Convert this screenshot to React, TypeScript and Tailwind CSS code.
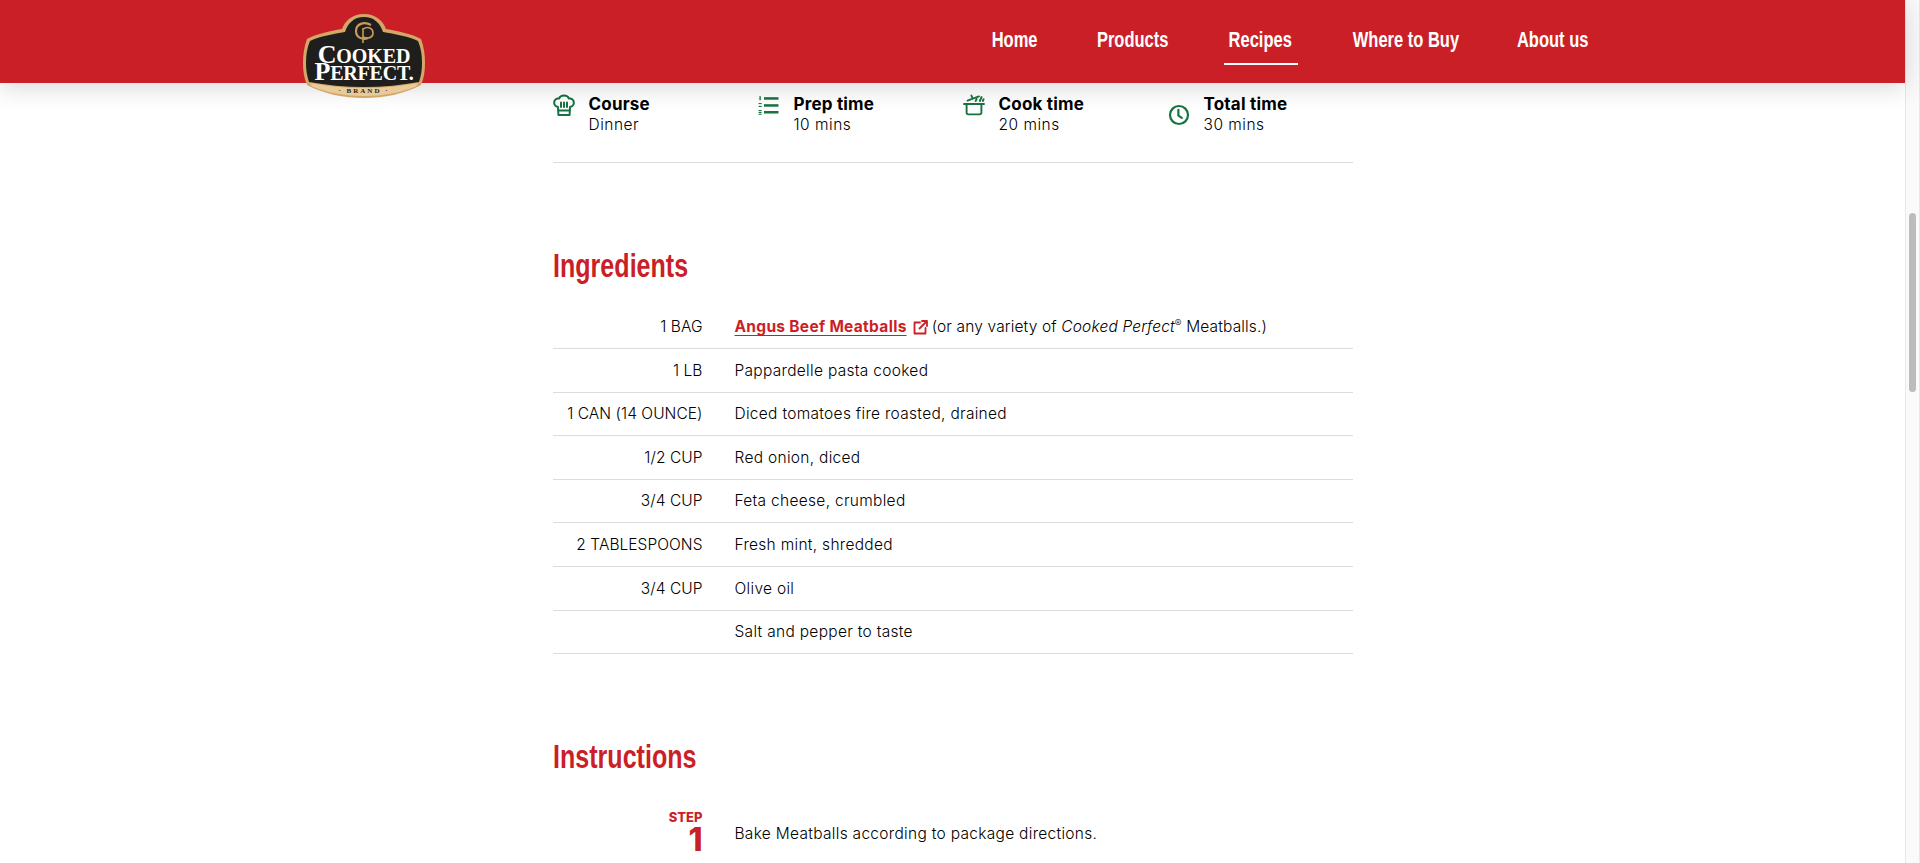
const navLinks = [
  { label: "Home", width: "w-[56px]" },
  { label: "Products", width: "w-[82px]" },
  { label: "Recipes", width: "w-[74px]", active: true },
  { label: "Where to Buy", width: "w-[117px]" },
  { label: "About us", width: "w-[79px]" },
];

const meta = [
  { label: "Course", value: "Dinner", icon: <ChefIcon />, iconClass: "" },
  { label: "Prep time", value: "10 mins", icon: <ListIcon />, iconClass: "" },
  { label: "Cook time", value: "20 mins", icon: <PotIcon />, iconClass: "" },
  { label: "Total time", value: "30 mins", icon: <ClockIcon />, iconClass: "mt-[10px]" },
];

const ingredients = [
  { qty: "1 LB", name: "Pappardelle pasta cooked" },
  { qty: "1 CAN (14 OUNCE)", name: "Diced tomatoes fire roasted, drained" },
  { qty: "1/2 CUP", name: "Red onion, diced" },
  { qty: "3/4 CUP", name: "Feta cheese, crumbled" },
  { qty: "2 TABLESPOONS", name: "Fresh mint, shredded" },
  { qty: "3/4 CUP", name: "Olive oil" },
  { qty: "", name: "Salt and pepper to taste" },
];

function ChefIcon() {
  return (
    <svg width="22" height="22" viewBox="0 0 22 22" fill="none" stroke="#17733f" strokeWidth="2" strokeLinejoin="round" strokeLinecap="round">
      <path d="M5 13C2.4 12.4 1 10.6 1.2 8.2 1.4 5.6 3.6 4 6 4.6 6.8 2.6 8.6 1.6 11 1.6s4.2 1 5 3c2.4-.6 4.6 1 4.8 3.6.2 2.4-1.2 4.2-3.8 4.8l-.4 8H5.4z" />
      <path d="M5.4 16.4h11.2M8 8.5v4.5M11 8.5v4.5M14 8.5v4.5" />
    </svg>
  );
}

function ListIcon() {
  return (
    <svg width="21" height="19" viewBox="0 0 21 19" fill="#17733f">
      <rect x="6" y="1.2" width="14.5" height="2.5" />
      <rect x="6" y="8.2" width="14.5" height="2.5" />
      <rect x="6" y="15" width="14.5" height="2.5" />
      <rect x="1.4" y="0.2" width="1.4" height="4" />
      <rect x="0.6" y="7" width="3" height="1.1" />
      <rect x="0.6" y="9.9" width="3" height="1.1" />
      <rect x="0.6" y="14" width="3" height="1.1" />
      <rect x="0.6" y="15.9" width="3" height="1.1" />
      <rect x="0.6" y="17.7" width="3" height="1.1" />
    </svg>
  );
}

function PotIcon() {
  return (
    <svg width="22" height="22" viewBox="0 0 22 22" fill="none" stroke="#17733f" strokeWidth="1.9" strokeLinecap="round" strokeLinejoin="round">
      <path d="M3.6 10v8.6c0 1 .8 1.8 1.8 1.8h11.2c1 0 1.8-.8 1.8-1.8V10z" />
      <path d="M1 10h20M4.5 6.6l11.5-4.2M9.2 3.4 8.4 1.6M18.6 3l-1.8 4M20.6 5.2l-.8 1.8M13.6 5.2l-1 1.8" />
    </svg>
  );
}

function ClockIcon() {
  return (
    <svg width="22" height="22" viewBox="0 0 22 22" fill="none" stroke="#17733f" strokeWidth="2.2" strokeLinecap="round" strokeLinejoin="round">
      <circle cx="11" cy="11" r="9" />
      <path d="M10.4 5.8v5.8l3.4 2.2" />
    </svg>
  );
}

function Logo() {
  return (
    <div className="absolute left-[302px] top-[13px] h-[86px] w-[124px] [font-family:'Liberation_Serif',serif]">
      <svg className="absolute inset-0" width="124" height="86" viewBox="0 0 124 86">
        <path
          d="M62 1C50 1 43 8 40 16C28 18 14 21 5 26C2 34 1 42 1 50C1 58 2 65 5 72C22 81 42 85 62 85S102 81 119 72C122 65 123 58 123 50C123 42 122 34 119 26C110 21 96 18 84 16C81 8 74 1 62 1Z"
          fill="#d3a768"
        />
        <path
          d="M62 4C52 4 46 10 43 19C32 21 18 23 8 28C5 35 4 42 4 50C4 57 5 63 7 69C24 72 43 74 62 74S100 72 117 69C119 63 120 57 120 50C120 42 119 35 116 28C106 23 92 21 81 19C78 10 72 4 62 4Z"
          fill="#1e1e1c"
        />
        <path d="M8 70C24 73 43 75 62 75S100 73 116 70C115 72 114 73 113 74C97 80 80 83 62 83S27 80 11 74C10 73 9 72 8 70Z" fill="#e9cb9a" />
        <path d="M69 12C62 8 54 11 54 18S61 27 66 25" fill="none" stroke="#c99a5b" strokeWidth="2.2" />
        <path d="M61 15V30M61 16C66 13 71 15 71 20S66 26 61 24" fill="none" stroke="#c99a5b" strokeWidth="1.6" />
      </svg>
      <div className="absolute inset-x-0 top-[33px] flex flex-col items-center font-bold leading-none text-white">
        <span className="h-[17px] text-[26px] leading-[17px] tracking-[-0.1px]">
          C<span className="text-[20px]">OOKED</span>
        </span>
        <span className="h-[17px] text-[26px] leading-[17px] tracking-[-0.2px]">
          P<span className="text-[20px]">ERFECT.</span>
        </span>
      </div>
      <div className="absolute inset-x-0 top-[74px] text-center text-[7px] font-bold leading-[8px] tracking-[2px] text-[#2a2118]">
        · BRAND ·
      </div>
    </div>
  );
}

export default function App() {
  return (
    <div className="flex h-[863px] overflow-hidden bg-white [font-family:Inter,sans-serif] text-black">
      <div className="relative min-w-0 flex-1">
        {/* Header */}
        <header className="absolute inset-x-0 top-0 z-10 h-[83px] bg-[#cb1f28] shadow-[0_4px_24px_rgba(0,0,0,0.16)]">
          <Logo />
          <nav className="absolute left-[986.5px] top-[17px] flex items-start gap-[49.5px] [font-family:'Liberation_Sans',sans-serif] text-[22px] font-bold text-white">
            {navLinks.map((l) => (
              <a
                key={l.label}
                className={`flex h-[48px] justify-center border-b-2 leading-[46px] ${l.width} ${l.active ? "border-white" : "border-transparent"}`}
              >
                <span className="shrink-0 scale-x-[0.75] whitespace-nowrap">{l.label}</span>
              </a>
            ))}
          </nav>
        </header>

        <main className="mx-auto w-[800px] pt-[94px]">
          {/* Recipe meta */}
          <div className="grid h-[69px] grid-cols-[repeat(4,205px)] border-b border-[#dcdcdc]">
            {meta.map((m) => (
              <div key={m.label} className="flex gap-[14px]">
                <div className={`flex h-[22px] w-[22px] items-center justify-center ${m.iconClass}`}>{m.icon}</div>
                <div>
                  <div className="text-[17px] font-bold leading-[20px] tracking-[0.2px]">{m.label}</div>
                  <div className="text-[15.5px] font-light leading-[21px] tracking-[0.5px]">{m.value}</div>
                </div>
              </div>
            ))}
          </div>

          <h2 className="mt-[80px] h-[46px] origin-left scale-x-[0.76] whitespace-nowrap [font-family:'Liberation_Sans',sans-serif] text-[33px] font-bold leading-[46px] text-[#cb1f28]">
            Ingredients
          </h2>

          {/* Ingredients */}
          <div className="mt-[17px] text-[15.5px] font-light tracking-[0.3px]">
            <div className="flex h-[43px] items-center border-b border-[#dcdcdc]">
              <div className="w-[150px] text-right tracking-[0.05px]">1 BAG</div>
              <div className="ml-[32px] flex items-center">
                <a className="font-bold text-[#cb1f28] underline underline-offset-[3px]">Angus Beef Meatballs</a>
                <svg className="ml-[6px] mr-[4px]" width="15" height="15" viewBox="0 0 15 15" fill="none" stroke="#cb1f28" strokeWidth="1.8" strokeLinecap="round" strokeLinejoin="round">
                  <path d="M7 2.5H1.5v11h11V8M6.5 8.5 13.5 1.5M9 1h5v5" />
                </svg>
                <span className="tracking-[0.15px]">
                  (or any variety of <em>Cooked Perfect</em>
                  <sup className="text-[10px]">®</sup> Meatballs.)
                </span>
              </div>
            </div>
            {ingredients.map((row) => (
              <div key={row.name} className="flex h-[43.6px] items-center border-b border-[#dcdcdc]">
                <div className="w-[150px] text-right tracking-[0.05px]">{row.qty}</div>
                <div className="ml-[32px]">{row.name}</div>
              </div>
            ))}
          </div>

          <h2 className="mt-[80px] h-[46px] origin-left scale-x-[0.76] whitespace-nowrap [font-family:'Liberation_Sans',sans-serif] text-[33px] font-bold leading-[46px] text-[#cb1f28]">
            Instructions
          </h2>

          {/* Steps */}
          <div className="mt-[31px] flex items-center">
            <div className="w-[150px] text-right font-extrabold text-[#cb1f28]">
              <div className="text-[13px] leading-[13px]">STEP</div>
              <div className="text-[32px] leading-[32px]">1</div>
            </div>
            <div className="ml-[32px] text-[15.5px] font-light tracking-[0.3px]">
              Bake Meatballs according to package directions.
            </div>
          </div>
        </main>
      </div>

      {/* Scrollbar */}
      <div className="w-[15px] shrink-0 border-x border-[#e8e8e8] bg-[#fafafa] pl-[3px] pt-[213px]">
        <div className="h-[179px] w-[7px] rounded-full bg-[#bcbcbc]" />
      </div>
    </div>
  );
}
